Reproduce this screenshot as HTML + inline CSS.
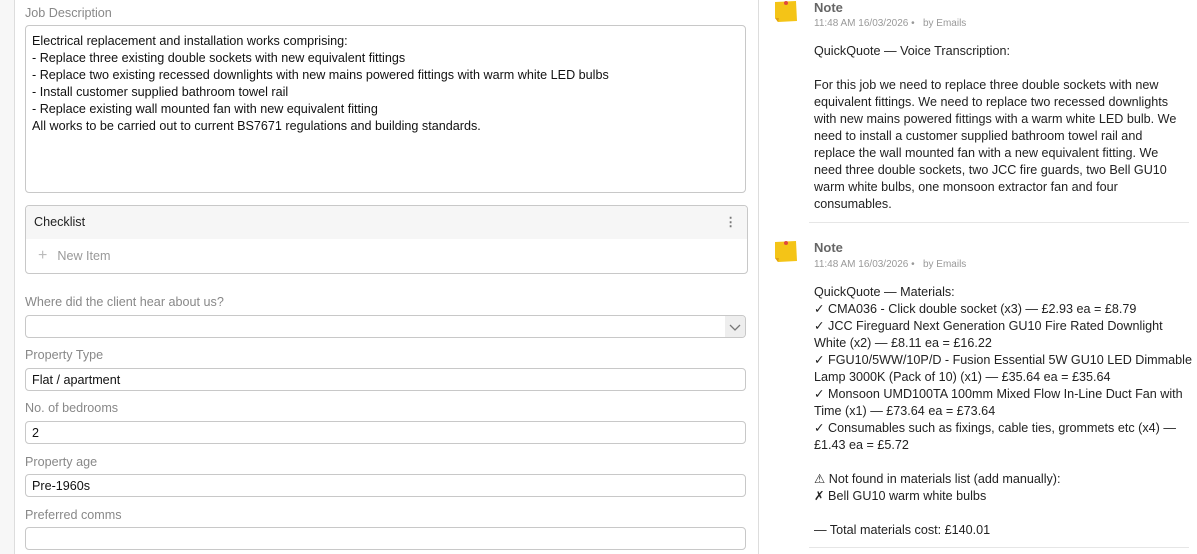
<!DOCTYPE html>
<html><head><meta charset="utf-8"><style>
body{margin:0;width:1197px;height:554px;overflow:hidden;background:#fff;font-family:"Liberation Sans",sans-serif;font-size:12.6px;color:#222;position:relative}
.a{position:absolute}
.lbl{position:absolute;left:25px;color:#888;font-size:12.6px}
.box{position:absolute;left:25px;width:721px;border:1px solid #c8c8c8;border-radius:4px;background:#fff}
.inp{height:22px;line-height:22px;padding-left:6px;box-sizing:border-box;color:#111}
.note{position:absolute;left:814px;width:368px;line-height:17px;font-size:12.6px;color:#222}
.t{position:absolute;left:814px;font-size:13px;font-weight:bold;color:#666}
.m{position:absolute;left:814px;font-size:10px;color:#999}
</style></head><body>
<div class="a" style="left:0;top:0;width:14px;height:554px;background:#f7f7f7;border-right:1px solid #ddd"></div>
<div class="a" style="left:758px;top:0;width:1px;height:554px;background:#ddd"></div>

<div class="lbl" style="top:6px">Job Description</div>
<div class="box" style="top:25px;height:168px;padding:7px 6px;box-sizing:border-box;line-height:17px;color:#111">Electrical replacement and installation works comprising:<br>- Replace three existing double sockets with new equivalent fittings<br>- Replace two existing recessed downlights with new mains powered fittings with warm white LED bulbs<br>- Install customer supplied bathroom towel rail<br>- Replace existing wall mounted fan with new equivalent fitting<br>All works to be carried out to current BS7671 regulations and building standards.</div>

<div class="box" style="top:205px;height:67px;overflow:hidden">
<div style="background:#f6f6f6;height:33px;line-height:33px;padding-left:8px;color:#222">Checklist<span style="position:absolute;right:10px;color:#777;font-weight:bold">&#8942;</span></div>
<div style="height:34px;line-height:34px;padding-left:12px;color:#999"><span style="font-size:16px;color:#bbb;margin-right:10px">+</span>New Item</div>
</div>

<div class="lbl" style="top:295px">Where did the client hear about us?</div>
<div class="box inp" style="top:315px;height:23px;overflow:hidden"><div style="position:absolute;right:0;top:0;width:20px;height:23px;background:#eee"><svg width="20" height="23"><path d="M5 9 L10 14 L15 9" fill="none" stroke="#777" stroke-width="1.3"/></svg></div></div>
<div class="lbl" style="top:348px">Property Type</div>
<div class="box inp" style="top:368px;height:23px">Flat / apartment</div>
<div class="lbl" style="top:401px">No. of bedrooms</div>
<div class="box inp" style="top:421px;height:23px">2</div>
<div class="lbl" style="top:455px">Property age</div>
<div class="box inp" style="top:474px;height:23px">Pre-1960s</div>
<div class="lbl" style="top:508px">Preferred comms</div>
<div class="box inp" style="top:527px;height:23px"></div>

<svg class="a" style="left:772px;top:0" width="26" height="24"><path d="M3 2 L24 1 L25 21 L6 22 L3 18 Z" fill="#f4c417"/><path d="M3 18 L6 22 L7 18 Z" fill="#e0a010"/><circle cx="14" cy="3" r="2" fill="#e04a3a"/></svg>
<div class="t" style="top:0px">Note</div>
<div class="m" style="top:18px">11:48 AM 16/03/2026 •&nbsp;&nbsp; by Emails</div>
<div class="note" style="top:43px">QuickQuote — Voice Transcription:<br><br>For this job we need to replace three double sockets with new equivalent fittings. We need to replace two recessed downlights with new mains powered fittings with a warm white LED bulb. We need to install a customer supplied bathroom towel rail and replace the wall mounted fan with a new equivalent fitting. We need three double sockets, two JCC fire guards, two Bell GU10 warm white bulbs, one monsoon extractor fan and four consumables.</div>
<div class="a" style="left:809px;top:222px;width:380px;height:1px;background:#e6e6e6"></div>

<svg class="a" style="left:772px;top:240px" width="26" height="24"><path d="M3 2 L24 1 L25 21 L6 22 L3 18 Z" fill="#f4c417"/><path d="M3 18 L6 22 L7 18 Z" fill="#e0a010"/><circle cx="14" cy="3" r="2" fill="#e04a3a"/></svg>
<div class="t" style="top:240px">Note</div>
<div class="m" style="top:259px">11:48 AM 16/03/2026 •&nbsp;&nbsp; by Emails</div>
<div class="note" style="top:284px;white-space:nowrap">QuickQuote — Materials:<br>✓ CMA036 - Click double socket (x3) — £2.93 ea = £8.79<br>✓ JCC Fireguard Next Generation GU10 Fire Rated Downlight<br>White (x2) — £8.11 ea = £16.22<br>✓ FGU10/5WW/10P/D - Fusion Essential 5W GU10 LED Dimmable<br>Lamp 3000K (Pack of 10) (x1) — £35.64 ea = £35.64<br>✓ Monsoon UMD100TA 100mm Mixed Flow In-Line Duct Fan with<br>Time (x1) — £73.64 ea = £73.64<br>✓ Consumables such as fixings, cable ties, grommets etc (x4) —<br>£1.43 ea = £5.72<br><br>⚠ Not found in materials list (add manually):<br>✗ Bell GU10 warm white bulbs<br><br>— Total materials cost: £140.01</div>
<div class="a" style="left:809px;top:547px;width:380px;height:1px;background:#e6e6e6"></div>
</body></html>
